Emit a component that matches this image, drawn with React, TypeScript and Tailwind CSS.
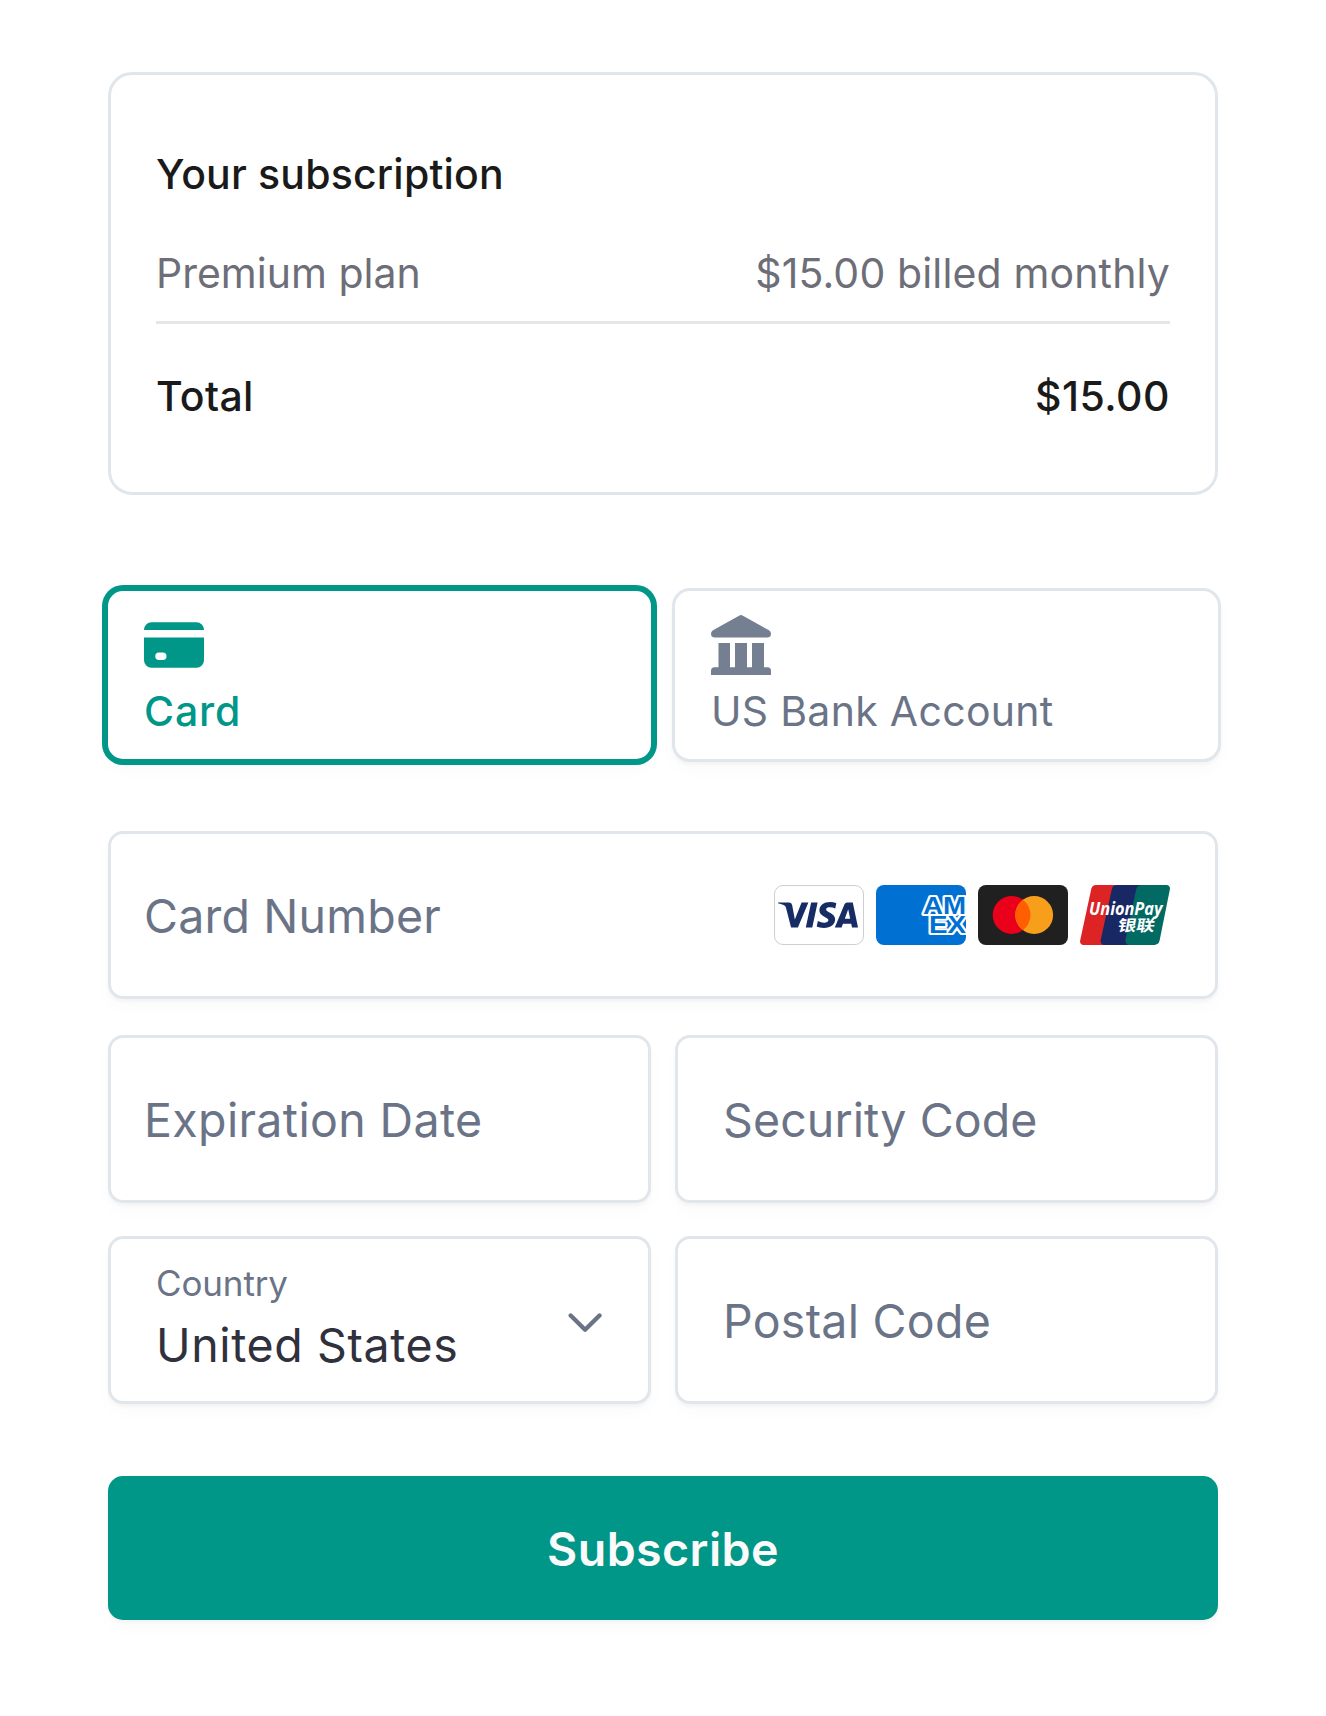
import React from 'react';
import { SiVisa } from 'react-icons/si';

function CardIcon() {
  return (
    <svg className="block size-[60px]" viewBox="0 0 60 60" fill="currentColor" aria-hidden="true">
      <path d="M7.5 7.2h45A7.5 7.5 0 0 1 60 14.7V15H0v-.3a7.5 7.5 0 0 1 7.5-7.5z" />
      <path
        fillRule="evenodd"
        d="M0 22.5h60V45.2a7.5 7.5 0 0 1-7.5 7.5h-45A7.5 7.5 0 0 1 0 45.2zM15 37.5a3.75 3.75 0 0 0 0 7.5h3.75a3.75 3.75 0 0 0 0-7.5z"
      />
    </svg>
  );
}

function BankIcon() {
  return (
    <svg className="block size-[60px] text-[#747f91]" viewBox="0 0 60 60" fill="currentColor" aria-hidden="true">
      <path d="M28.5.5a3 3 0 0 1 3 0L58 15.3a4 4 0 0 1 2 3.4 3.8 3.8 0 0 1-3.8 3.8H3.8A3.8 3.8 0 0 1 0 18.7a4 4 0 0 1 2-3.4z" />
      <path d="M7.5 28H19v24.3h5V28h12v24.3h5V28h12v24.3h3.5a3.5 3.5 0 0 1 3.5 3.5V60H0v-4.2a3.5 3.5 0 0 1 3.5-3.5h4z" />
    </svg>
  );
}

function VisaLogo() {
  return (
    <div className="flex h-[60px] w-[90px] items-center justify-center overflow-hidden rounded-[9px] border border-[#cfcfd1] bg-white pr-[3px]">
      <SiVisa className="size-[80px] shrink-0 text-[#172b65]" aria-label="Visa" />
    </div>
  );
}

function AmexLogo() {
  return (
    <svg className="block h-[60px] w-[90px] rounded-[8px] bg-[#0071d2]" viewBox="0 0 90 60" role="img" aria-label="American Express">
      <g
        fill="#0071d2"
        stroke="#fff"
        strokeWidth="4"
        strokeLinejoin="round"
        paintOrder="stroke"
        fontFamily="Liberation Sans, sans-serif"
        fontWeight="700"
        fontSize="23"
      >
        <text x="47" y="28.5" textLength="43" lengthAdjust="spacingAndGlyphs">AM</text>
        <text x="53" y="48" textLength="37" lengthAdjust="spacingAndGlyphs">EX</text>
      </g>
    </svg>
  );
}

function MastercardLogo() {
  return (
    <svg className="block h-[60px] w-[90px] rounded-[8px] bg-[#202020]" viewBox="0 0 90 60" role="img" aria-label="Mastercard">
      <circle cx="33.6" cy="30" r="18.9" fill="#eb001b" />
      <circle cx="56.2" cy="30" r="18.9" fill="#f79e1b" />
      <path d="M44.9 14.85a18.9 18.9 0 0 1 0 30.3a18.9 18.9 0 0 1 0-30.3z" fill="#ff5f00" />
    </svg>
  );
}

function UnionPayLogo() {
  return (
    <svg className="block h-[60px] w-[90px]" viewBox="0 0 90 60" role="img" aria-label="UnionPay">
      <path d="M16 0h22L26 60H3.5A3.5 3.5 0 0 1 .1 55.8L11.3 3.8A5 5 0 0 1 16 0z" fill="#dc2424" />
      <path d="M37 0h27L50 60H24.5a4 4 0 0 1-3.8-5L31.8 4.2A5.3 5.3 0 0 1 37 0z" fill="#172864" />
      <path d="M61.5 0H86.5a3.5 3.5 0 0 1 3.4 4.2L79.6 55.6A5.5 5.5 0 0 1 74.2 60H49.3a4 4 0 0 1-3.9-4.9L56.2 4.3A5.5 5.5 0 0 1 61.5 0z" fill="#016a62" />
      <g fill="#fff">
        <text x="9" y="29.7" fontFamily="Open Sans, sans-serif" fontStyle="italic" fontWeight="700" fontSize="17.5" textLength="73.5" lengthAdjust="spacingAndGlyphs">UnionPay</text>
        <text transform="translate(37 46.3) skewX(-10)" x="0" y="0" fontFamily="Noto Sans CJK SC, sans-serif" fontWeight="700" fontSize="15.5" textLength="37" lengthAdjust="spacingAndGlyphs">银联</text>
      </g>
    </svg>
  );
}

function Chevron() {
  return (
    <svg className="mt-[4px] block h-[20px] w-[34px]" viewBox="0 0 34 20" fill="none" stroke="#6b7487" strokeWidth="4.4" strokeLinecap="round" strokeLinejoin="round" aria-hidden="true">
      <path d="M2.7 2.5 17.1 16.7 31.5 2.5" />
    </svg>
  );
}

const fieldBase =
  'flex h-[168px] items-center rounded-[15px] border-[3px] border-[#e0e6eb] bg-white pt-[2px] text-[46.5px] leading-[60px] text-[#6b7487] shadow-[0_3px_3px_rgba(0,0,0,0.03),0_9px_18px_rgba(0,0,0,0.02)]';

export default function App() {
  return (
    <main className="min-h-[1716px] w-[1326px] bg-white px-[108px] pt-[72px] font-['Inter',sans-serif] whitespace-nowrap">
      <section className="h-[423px] rounded-[24px] border-[3px] border-[#e0e6eb] px-[45px] pt-[69px] text-[41px] leading-[60px]">
        <h2 className="font-medium tracking-[0.18px] text-[#1a1a1a]">Your subscription</h2>
        <div className="mt-[39px] flex justify-between border-b-[3px] border-[#e6e6e6] pb-[18px] text-[#6d6e78]">
          <span>Premium plan</span>
          <span className="tracking-[0.14px]">$15.00 billed monthly</span>
        </div>
        <div className="mt-[42px] flex justify-between font-medium text-[#1a1a1a]">
          <span className="tracking-[0.3px]">Total</span>
          <span className="tracking-[0.5px]">$15.00</span>
        </div>
      </section>

      <div className="-mx-[3px] mt-[93px] grid grid-cols-2 gap-[18px] text-[41px] leading-[48px]">
        <button className="flex h-[174px] flex-col items-start rounded-[18px] border-[3px] border-[#009688] bg-white px-[36px] pt-[24px] text-left font-medium text-[#009688] shadow-[0_0_0_3px_#009688,0_3px_3px_rgba(0,0,0,0.03),0_9px_18px_rgba(0,0,0,0.02)]">
          <CardIcon />
          <span className="mt-[12px] tracking-[0.86px]">Card</span>
        </button>
        <button className="flex h-[174px] flex-col items-start rounded-[18px] border-[3px] border-[#e0e6eb] bg-white px-[36px] pt-[24px] text-left text-[#6b7487] shadow-[0_3px_3px_rgba(0,0,0,0.03),0_9px_18px_rgba(0,0,0,0.02)]">
          <BankIcon />
          <span className="mt-[12px] tracking-[0.3px]">US Bank Account</span>
        </button>
      </div>

      <div className={`${fieldBase} mt-[69px] justify-between pr-[45px] pl-[33px]`}>
        <span className="tracking-[0.2px]">Card Number</span>
        <div className="-mt-[2px] flex gap-[12px]">
          <VisaLogo />
          <AmexLogo />
          <MastercardLogo />
          <UnionPayLogo />
        </div>
      </div>

      <div className="mt-[36px] grid grid-cols-2 gap-x-[24px] gap-y-[33px]">
        <div className={`${fieldBase} pl-[33px]`}>
          <span className="tracking-[0.36px]">Expiration Date</span>
        </div>
        <div className={`${fieldBase} pl-[45px]`}>
          <span className="tracking-[0.1px]">Security Code</span>
        </div>
        <div className={`${fieldBase} justify-between pr-[46px] pl-[45px]`}>
          <div className="-mt-[6px] flex flex-col gap-[11px]">
            <span className="text-[35px] leading-[42px] tracking-[-0.13px]">Country</span>
            <span className="tracking-[0.6px] text-[#30313d]">United States</span>
          </div>
          <Chevron />
        </div>
        <div className={`${fieldBase} pl-[45px]`}>
          <span className="tracking-[0.26px]">Postal Code</span>
        </div>
      </div>

      <button className="mt-[72px] block h-[144px] w-full rounded-[15px] bg-[#009688] pt-[2px] text-[46.5px] leading-[60px] font-semibold tracking-[0.44px] text-[#fafafa] shadow-[0_3px_3px_rgba(0,0,0,0.03),0_9px_18px_rgba(0,0,0,0.02)]">
        Subscribe
      </button>
    </main>
  );
}
